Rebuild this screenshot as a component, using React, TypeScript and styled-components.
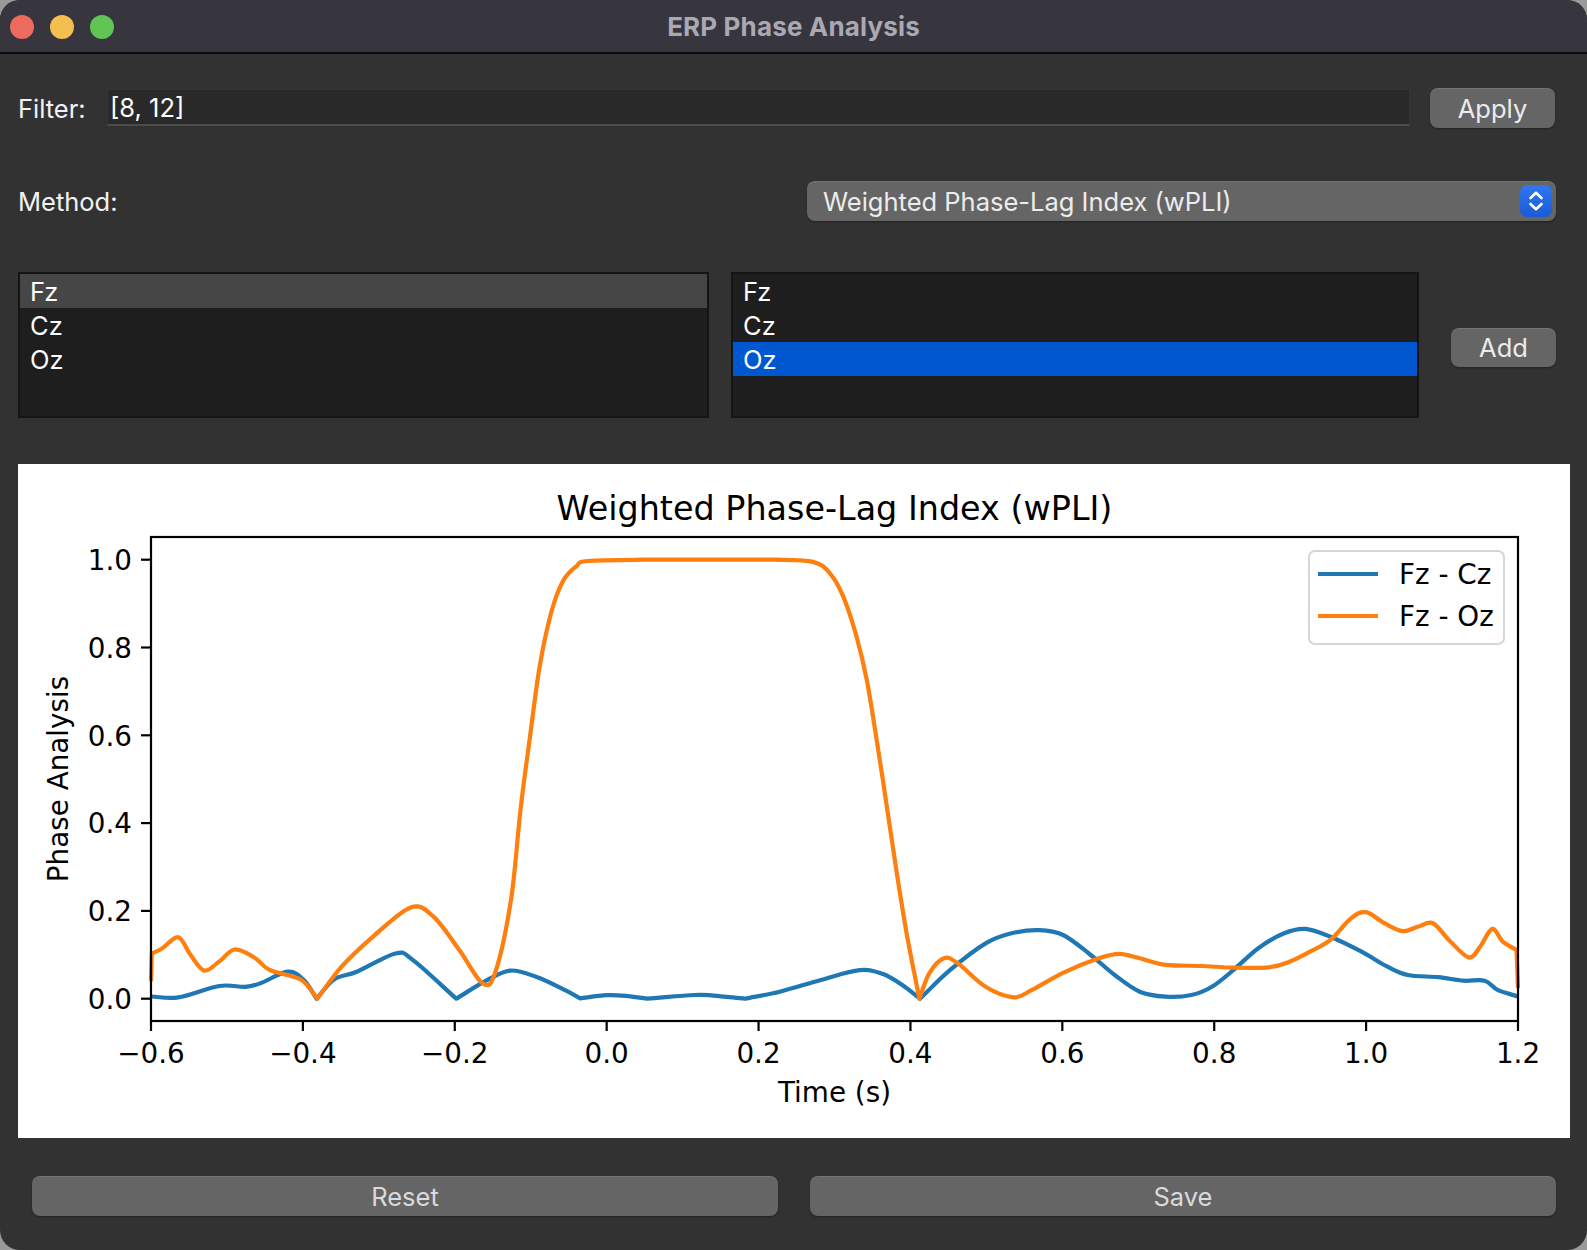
import React from "react";
import styled, { createGlobalStyle } from "styled-components";

const GlobalStyle = createGlobalStyle`
  html, body {
    margin: 0;
    padding: 0;
    background: #9a9a9a;
  }
  * {
    box-sizing: border-box;
  }
`;

const uiFont = `"Inter", "Liberation Sans", sans-serif`;
const plotFont = `"DejaVu Sans", sans-serif`;

const Window = styled.div`
  width: 1587px;
  height: 1250px;
  background: #323232;
  border-radius: 20px;
  overflow: hidden;
  display: flex;
  flex-direction: column;
  font-family: ${uiFont};
`;

const TitleBar = styled.div`
  height: 54px;
  background: #37353e;
  border-bottom: 2px solid #0c0c0c;
  display: grid;
  grid-template-columns: 1fr auto 1fr;
  align-items: center;
`;

const Lights = styled.div`
  display: flex;
  gap: 16px;
  padding-left: 10px;
  padding-top: 1px;
`;

const Light = styled.span<{ $color: string }>`
  width: 24px;
  height: 24px;
  border-radius: 50%;
  background: ${(p) => p.$color};
`;

const WindowTitle = styled.div`
  color: #aaa8b3;
  font-size: 26px;
  font-weight: 700;
  letter-spacing: 0.15px;
`;

const Body = styled.div`
  flex: 1;
  display: flex;
  flex-direction: column;
  padding: 34px 31px 0 18px;
`;

const Row = styled.div<{ $top: number; $height: number }>`
  display: flex;
  align-items: center;
  margin-top: ${(p) => p.$top}px;
  height: ${(p) => p.$height}px;
`;

const Label = styled.label`
  color: #f2f2f2;
  font-size: 25.5px;
  width: 89px;
  flex: none;
`;

const TextInput = styled.div`
  flex: 1;
  height: 37px;
  margin-top: 1px;
  align-self: flex-start;
  background: #292929;
  border: 1px solid #363636;
  border-bottom: 2px solid #4b4b4b;
  color: #ffffff;
  font-size: 25.5px;
  padding-left: 2px;
  display: flex;
  align-items: center;
`;

const Button = styled.button<{ $width?: number; $height?: number }>`
  width: ${(p) => (p.$width ? `${p.$width}px` : "auto")};
  flex: ${(p) => (p.$width ? "none" : "1")};
  height: ${(p) => p.$height ?? 40}px;
  background: #656565;
  border: none;
  border-radius: 8px;
  box-shadow: inset 0 1px 0 rgba(255, 255, 255, 0.1), 0 1px 2px rgba(0, 0, 0, 0.35);
  color: #ececec;
  font-family: ${uiFont};
  font-size: 25.5px;
  padding: 0;
`;

const Combo = styled.div`
  margin-left: auto;
  width: 749px;
  height: 40px;
  background: #656565;
  border-radius: 8px;
  box-shadow: inset 0 1px 0 rgba(255, 255, 255, 0.1), 0 1px 2px rgba(0, 0, 0, 0.35);
  display: flex;
  align-items: center;
  padding: 0 4px 0 16px;
  color: #ececec;
  font-size: 25.5px;
`;

const ComboText = styled.span`
  flex: 1;
`;

const ComboArrow = styled.span`
  width: 32px;
  height: 32px;
  border-radius: 7px;
  background: linear-gradient(#2f77f0, #1b5bd6);
  display: flex;
  align-items: center;
  justify-content: center;
`;

const List = styled.div<{ $width: number }>`
  width: ${(p) => p.$width}px;
  height: 146px;
  background: #1e1e1e;
  border: 2px solid #151515;
  display: flex;
  flex-direction: column;
`;

const ListItem = styled.div<{ $state?: "active" | "inactive" }>`
  height: 34px;
  flex: none;
  display: flex;
  align-items: center;
  padding-left: 10px;
  color: #ffffff;
  font-size: 25.5px;
  background: ${(p) =>
    p.$state === "active" ? "#0058d0" : p.$state === "inactive" ? "#464646" : "transparent"};
`;

const AddButton = styled(Button)`
  align-self: flex-start;
  margin-top: 56px;
  margin-left: 32px;
`;

const ChartPanel = styled.div`
  margin-top: 46px;
  margin-right: -14px;
  height: 674px;
  background: #ffffff;
`;

const ButtonRow = styled.div`
  margin-top: 38px;
  padding-left: 14px;
  display: flex;
  gap: 32px;
`;

const DimLabel = styled.span`
  color: #dadada;
`;

// ---- plot helpers -------------------------------------------------------

type Pt = [number, number, boolean?];

const AX = { left: 151, right: 1518, top: 537, bottom: 1021 };
const fx = (t: number) => AX.left + ((t + 0.6) / 1.8) * (AX.right - AX.left);
const fy = (v: number) => 998.7 - v * 439;

function smoothPath(data: Pt[]): string {
  const p = data.map(([t, v, c]) => ({ x: fx(t), y: fy(v), c: !!c }));
  const n = p.length;
  const tangent = (i: number, side: "in" | "out") => {
    if (i === 0) return { x: p[1].x - p[0].x, y: p[1].y - p[0].y };
    if (i === n - 1) return { x: p[n - 1].x - p[n - 2].x, y: p[n - 1].y - p[n - 2].y };
    if (p[i].c) {
      return side === "in"
        ? { x: p[i].x - p[i - 1].x, y: p[i].y - p[i - 1].y }
        : { x: p[i + 1].x - p[i].x, y: p[i + 1].y - p[i].y };
    }
    return { x: (p[i + 1].x - p[i - 1].x) / 2, y: (p[i + 1].y - p[i - 1].y) / 2 };
  };
  let d = `M${p[0].x.toFixed(1)},${p[0].y.toFixed(1)}`;
  for (let i = 0; i < n - 1; i++) {
    const m0 = tangent(i, "out");
    const m1 = tangent(i + 1, "in");
    const c1x = p[i].x + m0.x / 3;
    const c1y = p[i].y + m0.y / 3;
    const c2x = p[i + 1].x - m1.x / 3;
    const c2y = p[i + 1].y - m1.y / 3;
    d += ` C${c1x.toFixed(1)},${c1y.toFixed(1)} ${c2x.toFixed(1)},${c2y.toFixed(1)} ${p[i + 1].x.toFixed(1)},${p[i + 1].y.toFixed(1)}`;
  }
  return d;
}

const fzCz: Pt[] = [
  [-0.6, 0.005], [-0.564, 0.003], [-0.51, 0.029], [-0.476, 0.027], [-0.456, 0.035],
  [-0.42, 0.0615], [-0.399, 0.043], [-0.382, 0.0, true], [-0.359, 0.044], [-0.329, 0.0615],
  [-0.278, 0.103], [-0.255, 0.088], [-0.198, 0.0, true], [-0.161, 0.039], [-0.127, 0.064],
  [-0.093, 0.05], [-0.06, 0.024], [-0.035, 0.001, true], [0.0, 0.008], [0.0277, 0.006],
  [0.054, 0.0, true], [0.115, 0.0084], [0.141, 0.007], [0.182, 0.0, true], [0.228, 0.016],
  [0.282, 0.0426], [0.333, 0.065], [0.364, 0.056], [0.391, 0.029], [0.4126, 0.0, true],
  [0.452, 0.065], [0.499, 0.126], [0.533, 0.149], [0.57, 0.156], [0.601, 0.145],
  [0.635, 0.103], [0.669, 0.054], [0.702, 0.016], [0.736, 0.0046], [0.77, 0.0084],
  [0.797, 0.027], [0.825, 0.065], [0.858, 0.115], [0.892, 0.149], [0.92, 0.159],
  [0.953, 0.141], [0.994, 0.107], [1.028, 0.073], [1.055, 0.054], [1.095, 0.049],
  [1.128, 0.041], [1.156, 0.041], [1.173, 0.02], [1.2, 0.005],
];

const fzOz: Pt[] = [
  [-0.6, 0.04], [-0.599, 0.103, true], [-0.585, 0.115], [-0.564, 0.14], [-0.548, 0.1],
  [-0.53, 0.064], [-0.51, 0.085], [-0.49, 0.112], [-0.465, 0.095], [-0.443, 0.065],
  [-0.4025, 0.043], [-0.381, 0.0, true], [-0.349, 0.073], [-0.308, 0.141], [-0.258, 0.208],
  [-0.228, 0.187], [-0.194, 0.111], [-0.164, 0.036], [-0.147, 0.058], [-0.126, 0.225],
  [-0.1135, 0.43], [-0.101, 0.597], [-0.0883, 0.756], [-0.0733, 0.878], [-0.058, 0.95],
  [-0.04, 0.985], [-0.025, 0.997], [0.05, 1.0], [0.15, 1.0], [0.22, 1.0],
  [0.2717, 0.995], [0.294, 0.969], [0.3116, 0.916], [0.329, 0.825], [0.3425, 0.726],
  [0.3556, 0.589], [0.369, 0.437], [0.382, 0.286], [0.395, 0.149], [0.4117, 0.0, true],
  [0.425, 0.058], [0.444, 0.092], [0.462, 0.081], [0.499, 0.027], [0.536, 0.003],
  [0.56, 0.02], [0.601, 0.059], [0.648, 0.092], [0.675, 0.102], [0.702, 0.092],
  [0.736, 0.077], [0.784, 0.0745], [0.825, 0.0706], [0.872, 0.0715], [0.899, 0.084],
  [0.926, 0.107], [0.953, 0.134], [0.98, 0.183], [1.0, 0.197], [1.024, 0.172],
  [1.048, 0.154], [1.068, 0.164], [1.088, 0.172], [1.109, 0.134], [1.135, 0.094],
  [1.15, 0.118], [1.166, 0.159], [1.18, 0.13], [1.198, 0.111, true], [1.2, 0.024],
];

const xTicks = [-0.6, -0.4, -0.2, 0, 0.2, 0.4, 0.6, 0.8, 1.0, 1.2];
const yTicks = [0, 0.2, 0.4, 0.6, 0.8, 1.0];
const fmt = (n: number) => (n < 0 ? "\u2212" : "") + Math.abs(n).toFixed(1);

const BLUE = "#1f77b4";
const ORANGE = "#ff7f0e";
const LABEL_SIZE = 27.8;

const PhasePlot = () => (
  <svg width="1552" height="674" viewBox="18 464 1552 674" fontFamily={plotFont}>
    <text x={834.5} y={520} fontSize={33.4} textAnchor="middle" fill="#000">
      Weighted Phase-Lag Index (wPLI)
    </text>
    <path d={smoothPath(fzCz)} fill="none" stroke={BLUE} strokeWidth={4.2} strokeLinejoin="round" />
    <path d={smoothPath(fzOz)} fill="none" stroke={ORANGE} strokeWidth={4.2} strokeLinejoin="round" />
    <rect
      x={AX.left}
      y={AX.top}
      width={AX.right - AX.left}
      height={AX.bottom - AX.top}
      fill="none"
      stroke="#000"
      strokeWidth={2.2}
    />
    {xTicks.map((t) => (
      <g key={`x${t}`}>
        <line x1={fx(t)} x2={fx(t)} y1={AX.bottom} y2={AX.bottom + 10} stroke="#000" strokeWidth={2.2} />
        <text x={fx(t)} y={1063} fontSize={LABEL_SIZE} textAnchor="middle">
          {fmt(t)}
        </text>
      </g>
    ))}
    {yTicks.map((v) => (
      <g key={`y${v}`}>
        <line x1={AX.left - 10} x2={AX.left} y1={fy(v)} y2={fy(v)} stroke="#000" strokeWidth={2.2} />
        <text x={132} y={fy(v) + 10.2} fontSize={LABEL_SIZE} textAnchor="end">
          {fmt(v)}
        </text>
      </g>
    ))}
    <text x={834.5} y={1102} fontSize={LABEL_SIZE} textAnchor="middle">
      Time (s)
    </text>
    <text x={68} y={779} fontSize={LABEL_SIZE} textAnchor="middle" transform="rotate(-90 68 779)">
      Phase Analysis
    </text>
    <rect x={1309} y={551} width={195} height={93} rx={6} fill="#fff" fillOpacity={0.8} stroke="#d6d6d6" strokeWidth={2} />
    <line x1={1318} x2={1378} y1={574} y2={574} stroke={BLUE} strokeWidth={4.2} />
    <line x1={1318} x2={1378} y1={616} y2={616} stroke={ORANGE} strokeWidth={4.2} />
    <text x={1399} y={584} fontSize={LABEL_SIZE}>
      Fz - Cz
    </text>
    <text x={1399} y={626} fontSize={LABEL_SIZE}>
      Fz - Oz
    </text>
  </svg>
);

const UpDown = () => (
  <svg width="32" height="32" viewBox="0 0 32 32">
    <path
      d="M10.5 13 L16 7.8 L21.5 13 M10.5 19 L16 24.2 L21.5 19"
      fill="none"
      stroke="#fff"
      strokeWidth={2.6}
      strokeLinecap="round"
      strokeLinejoin="round"
    />
  </svg>
);

const channels = ["Fz", "Cz", "Oz"];

export default function App() {
  return (
    <>
      <GlobalStyle />
      <Window>
        <TitleBar>
          <Lights>
            <Light $color="#ed6a5e" />
            <Light $color="#f5bf4f" />
            <Light $color="#61c554" />
          </Lights>
          <WindowTitle>ERP Phase Analysis</WindowTitle>
          <span />
        </TitleBar>
        <Body>
          <Row $top={0} $height={40}>
            <Label>Filter:</Label>
            <TextInput>[8, 12]</TextInput>
            <Button $width={125} style={{ marginLeft: 20, marginRight: 1 }}>
              Apply
            </Button>
          </Row>
          <Row $top={53} $height={40}>
            <Label style={{ width: "auto" }}>Method:</Label>
            <Combo>
              <ComboText>Weighted Phase-Lag Index (wPLI)</ComboText>
              <ComboArrow>
                <UpDown />
              </ComboArrow>
            </Combo>
          </Row>
          <Row $top={51} $height={146}>
            <List $width={691}>
              {channels.map((c, i) => (
                <ListItem key={c} $state={i === 0 ? "inactive" : undefined}>
                  {c}
                </ListItem>
              ))}
            </List>
            <List $width={688} style={{ marginLeft: 22 }}>
              {channels.map((c, i) => (
                <ListItem key={c} $state={i === 2 ? "active" : undefined}>
                  {c}
                </ListItem>
              ))}
            </List>
            <AddButton $width={105} $height={39}>
              Add
            </AddButton>
          </Row>
          <ChartPanel>
            <PhasePlot />
          </ChartPanel>
          <ButtonRow>
            <Button>
              <DimLabel>Reset</DimLabel>
            </Button>
            <Button>
              <DimLabel>Save</DimLabel>
            </Button>
          </ButtonRow>
        </Body>
      </Window>
    </>
  );
}
